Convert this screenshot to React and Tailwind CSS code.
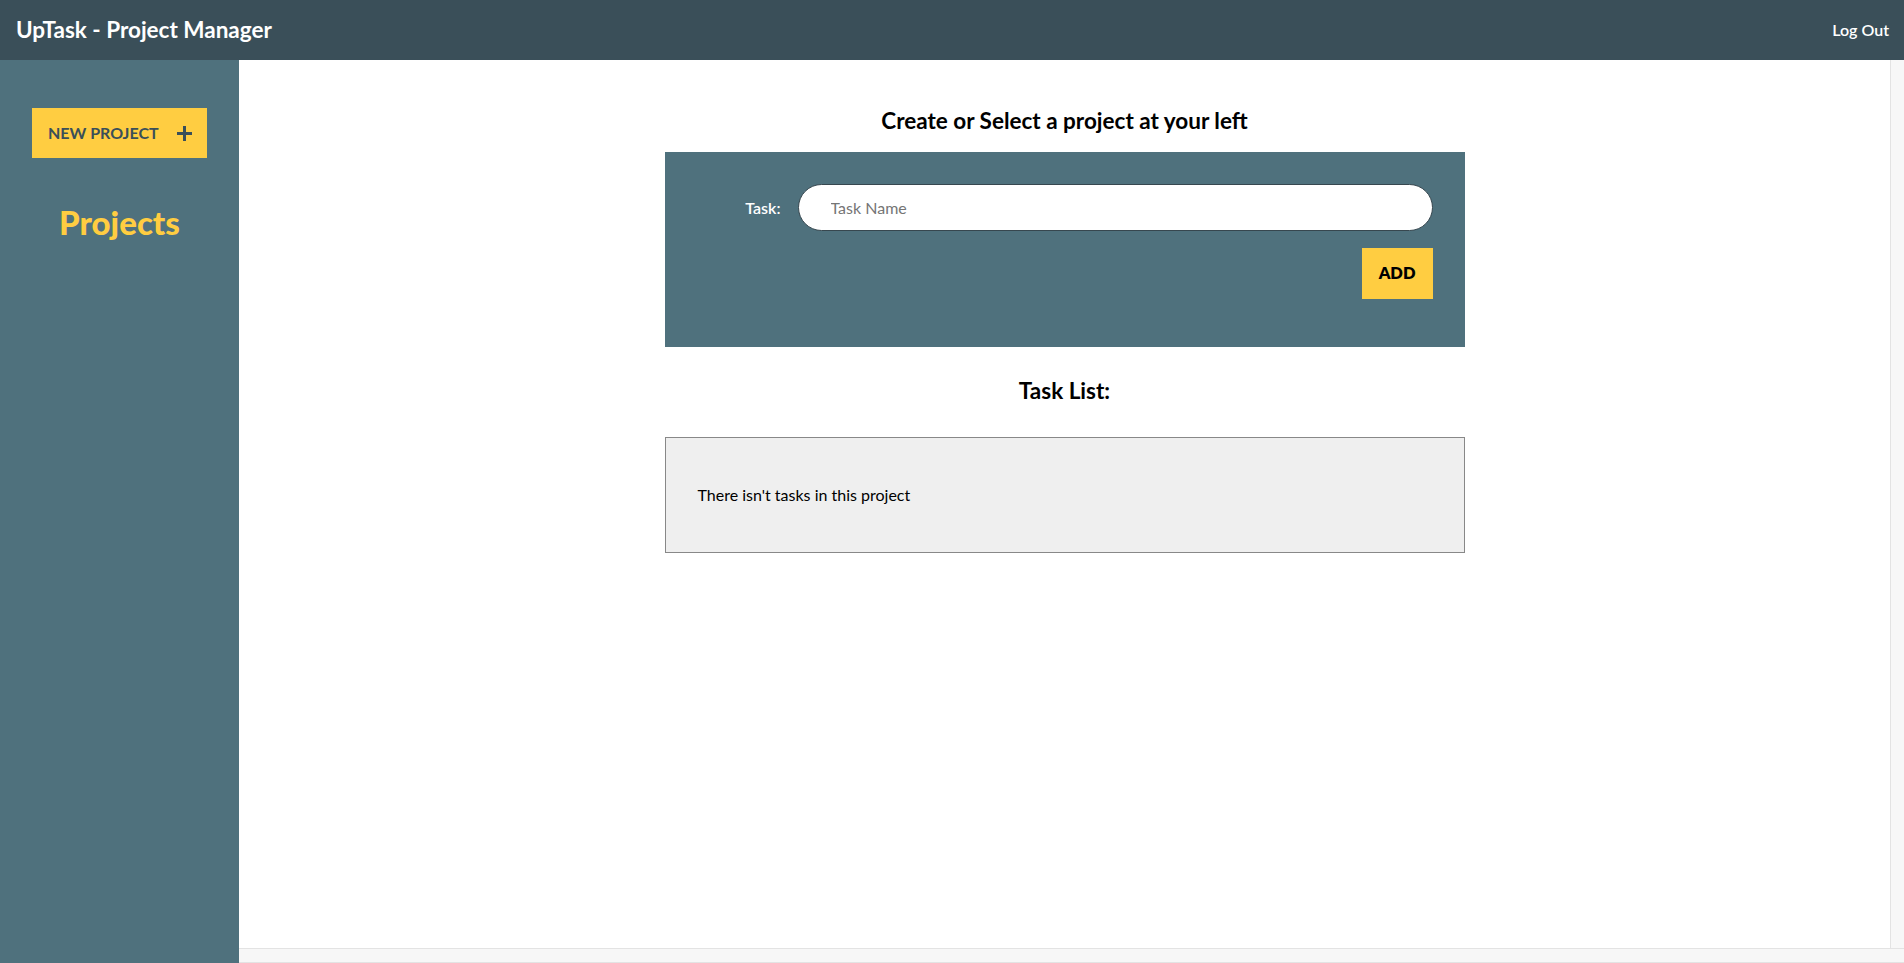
import React from 'react';

function Header() {
  return (
    <header className="h-[60px] shrink-0 flex items-center justify-between bg-[#3a4f59] pl-4 pr-[15px]">
      <h1 className="text-[22.5px] font-bold text-white leading-none">UpTask - Project Manager</h1>
      <button className="text-[16px] font-semibold text-white leading-none">Log Out</button>
    </header>
  );
}

function Sidebar() {
  return (
    <aside className="w-[239px] shrink-0 bg-[#4f717d] flex flex-col items-start pt-12 px-8">
      <button className="h-[50px] w-[175px] bg-[#ffcd41] flex items-center pl-4 pr-[15px] text-[#3a4f59]">
        <span className="text-[16px] font-bold leading-none">NEW PROJECT</span>
        <svg className="ml-auto" width="15" height="15" viewBox="0 0 15 15">
          <path d="M7.5 0v15M0 7.5h15" stroke="#3a4f59" strokeWidth="3" />
        </svg>
      </button>
      <h2 className="self-stretch -mx-8 mt-[45px] text-center text-[33px] leading-[38px] font-black text-[#ffcd41]">
        Projects
      </h2>
    </aside>
  );
}

function TaskForm() {
  return (
    <form className="bg-[#4f717d] h-[195px] px-8 pt-8" onSubmit={(e) => e.preventDefault()}>
      <div className="flex items-center">
        <label className="w-[101px] pr-[17px] text-right text-[16px] font-semibold text-white">Task:</label>
        <input
          type="text"
          placeholder="Task Name"
          className="flex-1 h-[47px] rounded-full border border-[#37474f] bg-white pl-8 text-[16px] text-black placeholder:text-[#757575] outline-none"
        />
      </div>
      <div className="flex justify-end mt-[17px]">
        <button className="h-[51px] px-[17px] bg-[#ffcd41] text-[16.5px] font-extrabold text-black">ADD</button>
      </div>
    </form>
  );
}

function TaskList() {
  return (
    <div className="h-[116px] border border-[#888888] bg-[#efefef] flex items-center px-8">
      <p className="text-[16px] text-black">There isn't tasks in this project</p>
    </div>
  );
}

export default function App() {
  return (
    <div className="h-screen flex flex-col font-['Lato',sans-serif] overflow-hidden">
      <Header />
      <div className="flex flex-1 min-h-0">
        <Sidebar />
        <div className="flex-1 flex flex-col min-w-0">
          <div className="flex flex-1 min-h-0">
            <main className="flex-1 bg-white pt-[46px]">
              <div className="w-[800px] mx-auto">
                <h2 className="text-center text-[22.5px] leading-[29px] font-bold text-black">
                  Create or Select a project at your left
                </h2>
                <div className="mt-[17px]">
                  <TaskForm />
                </div>
                <h2 className="mt-[29px] text-center text-[22.5px] leading-[29px] font-bold text-black">Task List:</h2>
                <div className="mt-8">
                  <TaskList />
                </div>
              </div>
            </main>
            <div className="w-[14px] shrink-0 bg-[#f7f7f7] border-l border-[#e3e3e3]" />
          </div>
          <div className="h-[15px] shrink-0 bg-[#f7f7f7] border-t border-b border-[#e3e3e3]" />
        </div>
      </div>
    </div>
  );
}
